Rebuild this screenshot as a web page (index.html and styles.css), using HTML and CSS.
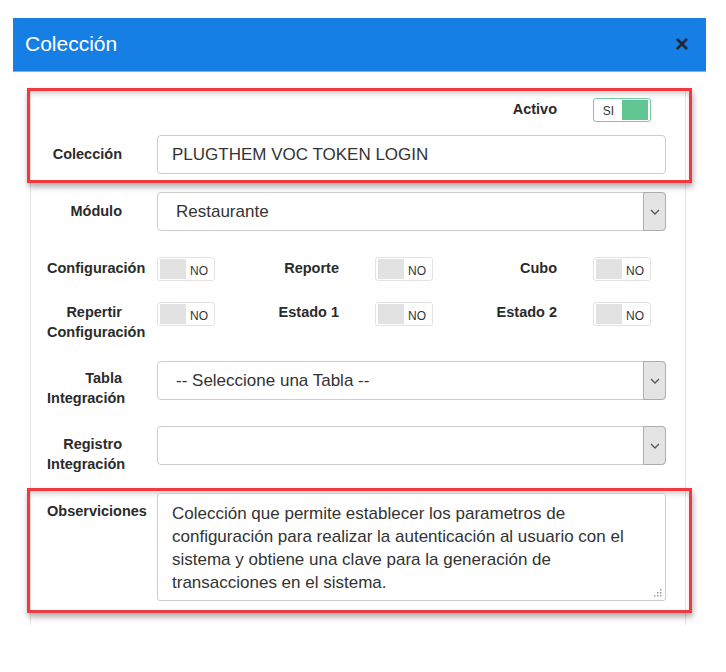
FILE: index.html
```html
<!DOCTYPE html>
<html lang="es">
<head>
<meta charset="utf-8">
<title>Colección</title>
<link rel="stylesheet" href="styles.css">
</head>
<body>
<div class="page">
  <div class="modal">
    <div class="modal-header">
      <span class="title">Colección</span>
      <span class="close">×</span>
    </div>
    <div class="panel">
      <div class="annot annot-top">
        <div class="tgl-row">
          <span></span><span></span><span></span><span></span>
          <span class="tlbl tlbl-r">Activo</span>
          <span class="tg tg-on"><span class="tg-txt">SI</span><span class="tg-knob"></span></span>
        </div>
        <div class="row row-first">
          <label class="lbl lbl-one">Colección</label>
          <div class="inp">PLUGTHEM VOC TOKEN LOGIN</div>
        </div>
      </div>

      <div class="row row-modulo">
        <label class="lbl lbl-one">Módulo</label>
        <div class="sel"><span class="sel-text">Restaurante</span><span class="sel-arrow"><svg width="10" height="6" viewBox="0 0 10 6"><polyline points="1,1 5,5 9,1" fill="none" stroke="#555" stroke-width="1.3"/></svg></span></div>
      </div>

      <div class="tgl-row tgl-1">
        <span class="tlbl">Configuración</span>
        <span class="tg"><span class="tg-knob"></span><span class="tg-txt">NO</span></span>
        <span class="tlbl tlbl-r">Reporte</span>
        <span class="tg"><span class="tg-knob"></span><span class="tg-txt">NO</span></span>
        <span class="tlbl tlbl-r">Cubo</span>
        <span class="tg"><span class="tg-knob"></span><span class="tg-txt">NO</span></span>
      </div>

      <div class="tgl-row tgl-2">
        <span class="tlbl">Repertir Configuración</span>
        <span class="tg"><span class="tg-knob"></span><span class="tg-txt">NO</span></span>
        <span class="tlbl tlbl-r">Estado 1</span>
        <span class="tg"><span class="tg-knob"></span><span class="tg-txt">NO</span></span>
        <span class="tlbl tlbl-r">Estado 2</span>
        <span class="tg"><span class="tg-knob"></span><span class="tg-txt">NO</span></span>
      </div>

      <div class="row row-tabla">
        <label class="lbl">Tabla Integración</label>
        <div class="sel"><span class="sel-text">-- Seleccione una Tabla --</span><span class="sel-arrow"><svg width="10" height="6" viewBox="0 0 10 6"><polyline points="1,1 5,5 9,1" fill="none" stroke="#555" stroke-width="1.3"/></svg></span></div>
      </div>

      <div class="row row-registro">
        <label class="lbl lbl-reg">Registro Integración</label>
        <div class="sel"><span class="sel-text"></span><span class="sel-arrow"><svg width="10" height="6" viewBox="0 0 10 6"><polyline points="1,1 5,5 9,1" fill="none" stroke="#555" stroke-width="1.3"/></svg></span></div>
      </div>

      <div class="annot annot-bottom">
        <div class="row">
          <label class="lbl lbl-obs">Observiciones</label>
          <div class="area-wrap">
            <textarea class="area">Colección que permite establecer los parametros de configuración para realizar la autenticación al usuario con el sistema y obtiene una clave para la generación de transacciones en el sistema.</textarea>
            <svg class="grip" width="9" height="9" viewBox="0 0 9 9"><g fill="#9a9a9a"><rect x="7" y="1" width="1.5" height="1.5"/><rect x="4" y="4" width="1.5" height="1.5"/><rect x="7" y="4" width="1.5" height="1.5"/><rect x="1" y="7" width="1.5" height="1.5"/><rect x="4" y="7" width="1.5" height="1.5"/><rect x="7" y="7" width="1.5" height="1.5"/></g></svg>
          </div>
        </div>
      </div>
    </div>
  </div>
</div>
</body>
</html>
```

FILE: styles.css
```css
* { box-sizing: border-box; }
body {
  margin: 0;
  font-family: "Liberation Sans", Arial, sans-serif;
  color: #333;
  background: #fff;
}
.page { padding: 18px 0 0 13px; }
.modal { width: 693px; }
.modal-header {
  height: 54px;
  background: #167fe6;
  border-bottom: 1px solid #74b3ef;
  display: flex;
  align-items: center;
  justify-content: space-between;
  padding: 0 17px 2px 12px;
}
.title { color: #fff; font-size: 21px; }
.close { color: #1e2833; font-size: 24px; font-weight: bold; line-height: 1; }

.panel {
  margin: 16px 0 0 17px;
  width: 656px;
  border-left: 1px solid #e4e4e4;
  border-right: 1px solid #e4e4e4;
  padding: 0 19px 12px 16px;
}
.annot {
  border: 3px solid #ef3a3e;
  margin: 0 -26px 0 -20px;
  padding: 7px 23px 6px 17px;
  box-shadow: 1px 4px 6px rgba(0,0,0,.32), inset 0 4px 5px -1px rgba(0,0,0,.18);
}
.annot-bottom { padding: 2px 23px 9px 17px; margin-top: 14px; }

.row { display: grid; grid-template-columns: 110px 509px; }
.row-first { margin-top: 13px; }
.row-modulo { margin-top: 9px; }
.row-tabla { margin-top: 19px; }
.row-registro { margin-top: 18px; }

.lbl {
  padding: 7px 35px 0 0;
  text-align: right;
  font-weight: bold;
  font-size: 14.5px;
  line-height: 20px;
  color: #2b2b2b;
}
.lbl-one { padding-top: 9px; }
.lbl-reg { padding-top: 8px; }
.lbl-obs { padding-top: 8px; }

.tgl-row { display: grid; grid-template-columns: 110px 58px 160px 58px 160px 58px; align-items: start; }
.tgl-1 { margin-top: 26px; }
.tgl-2 { margin-top: 21px; }
.tlbl {
  padding: 1px 35px 0 0;
  text-align: right;
  font-weight: bold;
  font-size: 14.5px;
  line-height: 20px;
  color: #2b2b2b;
}
.tgl-2 .tlbl { padding-top: 0; }
.tlbl-r { padding-right: 36px; }

.tg {
  width: 58px;
  height: 24px;
  border: 1px solid #e3e3e3;
  border-radius: 3px;
  padding: 1px 2px;
  display: flex;
}
.tg-knob { width: 26px; height: 20px; background: #e2e2e2; }
.tg-txt {
  flex: 1;
  text-align: center;
  font-size: 12px;
  padding-top: 5px;
  color: #333;
}
.tg-on { border: 1px solid #74cca0; padding: 1px 2px 1px 1px; }
.tg-on .tg-knob { background: #62c694; }
.tg-on .tg-txt { padding-top: 4px; }

.inp {
  height: 39px;
  border: 1px solid #ccc;
  border-radius: 4px;
  padding: 0 14px;
  line-height: 37px;
  font-size: 17px;
  color: #333;
}
.sel {
  height: 39px;
  border: 1px solid #ccc;
  border-radius: 4px;
  display: flex;
}
.sel-text {
  flex: 1;
  padding-left: 18px;
  line-height: 37px;
  font-size: 17px;
  color: #333;
}
.sel-arrow {
  width: 23px;
  margin: -1px -1px -1px 0;
  background: #e4e4e4;
  border: 1px solid #adadad;
  border-radius: 0 4px 4px 0;
  display: flex;
  align-items: center;
  justify-content: center;
}
.area-wrap { position: relative; }
.area {
  display: block;
  width: 509px;
  height: 108px;
  border: 1px solid #ccc;
  border-radius: 3px;
  padding: 8px 24px 0 14px;
  font-family: "Liberation Sans", Arial, sans-serif;
  font-size: 17px;
  line-height: 23px;
  color: #333;
  resize: none;
  overflow: hidden;
  margin: 0;
}
.grip { position: absolute; right: 4px; bottom: 4px; }
```
